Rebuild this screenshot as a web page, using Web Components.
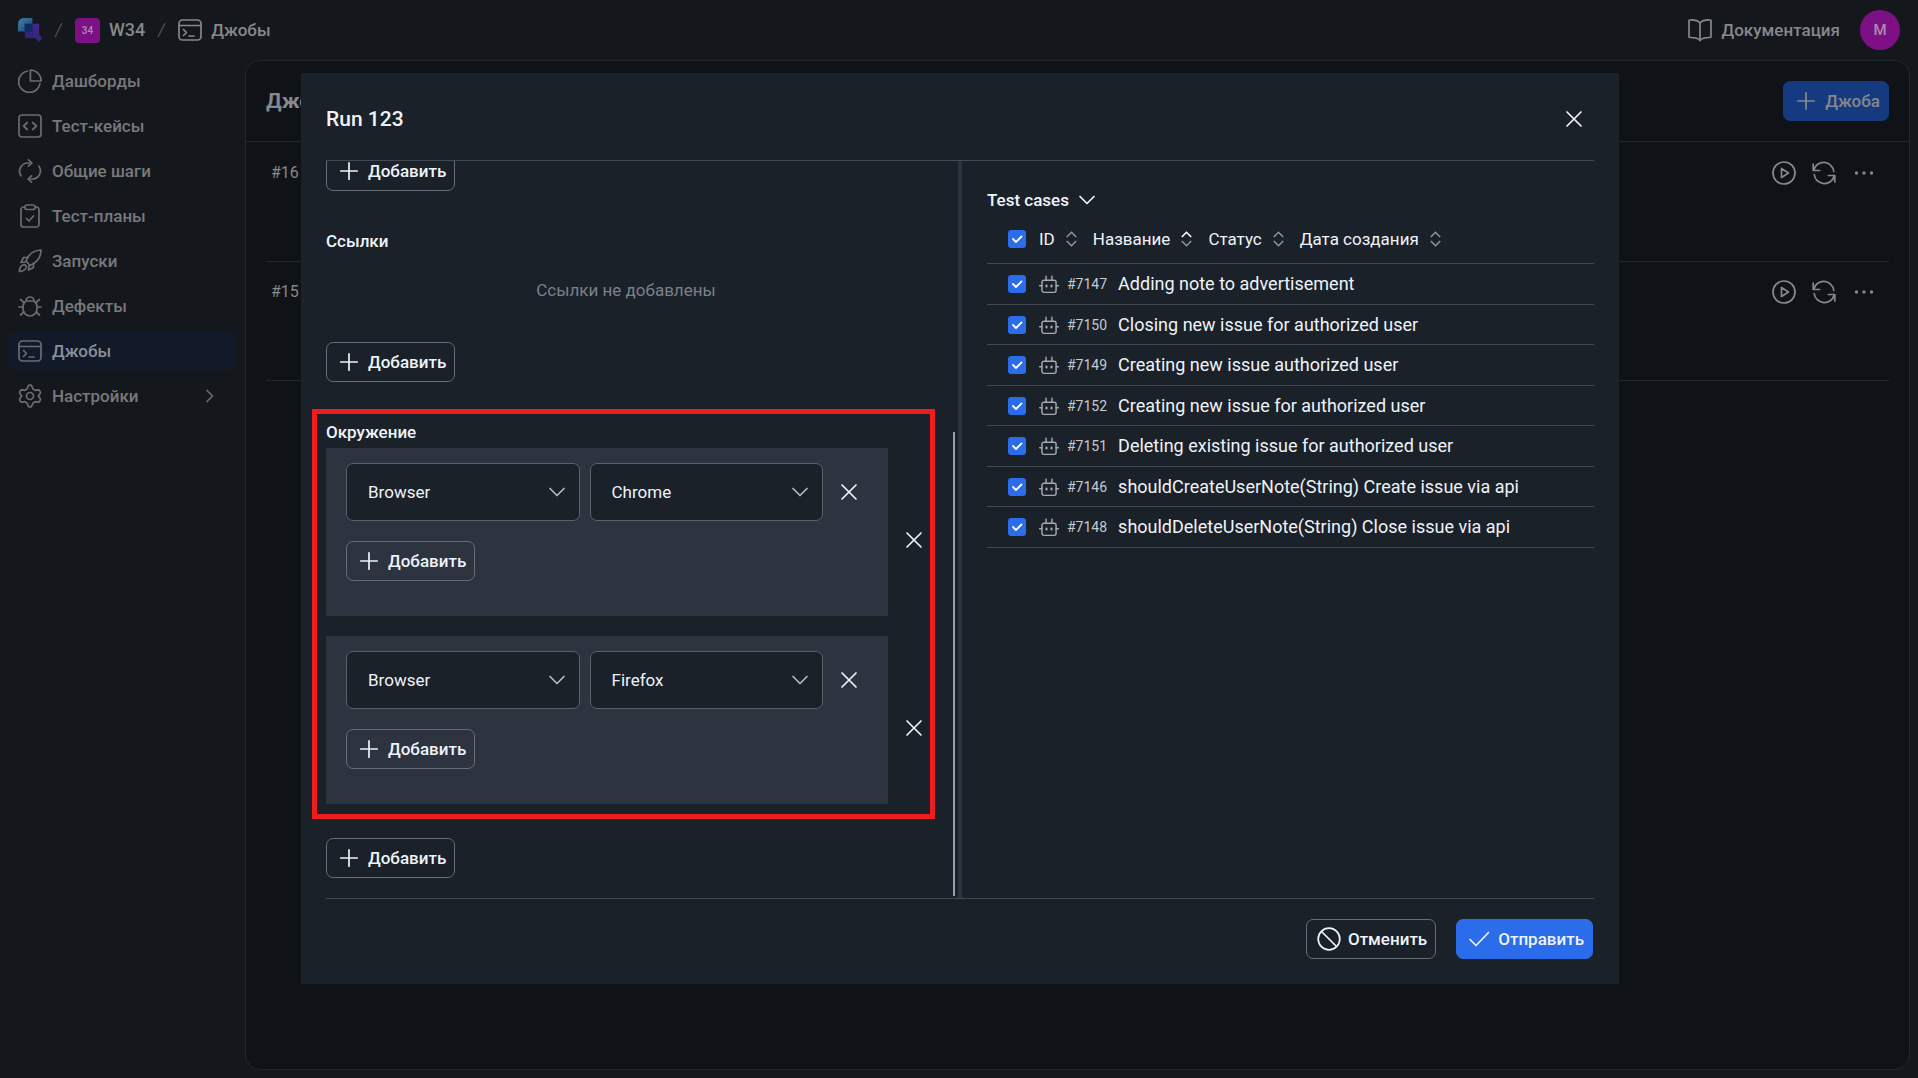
<!DOCTYPE html>
<html lang="ru">
<head>
<meta charset="utf-8">
<title>Run 123</title>
<style>
  html, body {
    margin: 0;
    height: 100%;
    overflow: hidden;
  }
  body {
    background-color: #14171b;
    font-family: Roboto, 'Noto Sans', sans-serif;
    font-size: 17px;
    line-height: 24px;
    color: #eef3fa;
  }
</style>
</head>
<body>
<tms-app></tms-app>

<script>
const ICONS = {
  logo: `<defs>
      <linearGradient id="a" x1="0" y1="0" x2="1" y2="1"><stop offset="0" stop-color="#3f86a3"/><stop offset="1" stop-color="#1b3f7c"/></linearGradient>
      <linearGradient id="b" x1="0" y1="1" x2="1" y2="0"><stop offset="0" stop-color="#2c2468"/><stop offset="1" stop-color="#432a8c"/></linearGradient>
    </defs>
    <path d="M6 0h9v14H0V6a6 6 0 0 1 6-6z" fill="url(#a)" stroke="none"/>
    <path d="M7 6h15v11l3 4-3 4-4-4H9a2 2 0 0 1-2-2z" fill="url(#b)" stroke="none"/>
    <path d="M7 6h8v8H7z" fill="#102a63" stroke="none"/>`,
  dashboard: '<path d="M9.5 2A10.8 10.8 0 1 0 22 14.7"/><path d="M12.4 1v11h10.8A10.9 10.9 0 0 0 12.4 1z"/>',
  code: '<rect x="1" y="1" width="22" height="22" rx="3"/><path d="M9.3 8.5 5.5 12l3.8 3.5M14.7 8.5l3.8 3.5-3.8 3.5"/>',
  sync: '<path d="M13.5 4H10a8.2 8.2 0 0 0-7 12.8M10.5 20H14a8.2 8.2 0 0 0 7-12.8"/><path d="M10.5.8 13.9 4l-3.4 3.2M13.5 16.8 10.1 20l3.4 3.2"/>',
  plan: '<path d="M7 3H5.5A2.5 2.5 0 0 0 3 5.5v15A2.500 2.500 0 0 0 5.5 23h13a2.500 2.500 0 0 0 2.500-2.500v-15A2.500 2.500 0 0 0 18.500 3H17"/><path d="M9 1h6a2 2 0 0 1 0 4.500H9A2 2 0 0 1 9 1zM8.500 14.500l2.500 2.500 4.500-5"/>',
  rocket: '<path d="M8 12c2-6 7-10.500 15-11 0 8-5 13-11 15.500z"/><path d="M10 8.500H5.500L3 13.500l4-.5M15.500 14v4.500l-5 2.500.5-4.500"/><path d="M5 16c-2.500 1-3.500 3.500-3.700 6.500 3-.2 5.700-1 6.700-3.500a2.200 2.200 0 0 0-3-3z"/>',
  bug: '<path d="M5 12a7 7 0 0 1 3-5h8a7 7 0 0 1 3 5v3a7 7 0 0 1-14 0zM8 7a4 4 0 0 1 8 0"/><path d="M5 13H1M19 13h4M6 8.500 2.500 5.500M18 8.500l3.500-3M6 18l-3.500 3M18 18l3.500 3"/>',
  terminal: '<rect x="1" y="2" width="22" height="20" rx="3.500"/><path d="M1 7.500h22M5.500 11.500 8.500 14.500 5.500 17.500M11 18h5"/>',
  gear: '<path d="M10 2.500 10.800 1.200h2.400l.8 1.300 1 2.500 2.300 1.300 2.700-.4 1.300.3 1.200 2.100-.5 1.400-1.700 2.300 1.700 2.300.5 1.400-1.200 2.100-1.300.3-2.700-.4-2.300 1.300-1 2.500-.8 1.300h-2.400l-.8-1.300-1-2.500-2.300-1.300-2.700.4-1.300-.3-1.200-2.100.5-1.400L3.700 12 2 9.700l-.5-1.400 1.200-2.100 1.300-.3 2.700.4L9 5z"/><circle cx="12" cy="12" r="3.500"/>',
  next: '<path d="m10 6.500 5.500 5.500-5.500 5.500"/>',
  down: '<path d="m5 8.500 7 7 7-7"/>',
  book: '<path d="M12 5C10 2.500 6 1.800 1.800 2A.9.900 0 0 0 1 3v15.500a1 1 0 0 0 1 1c4-.1 8 .3 10 3 2-2.700 6-3.100 10-3a1 1 0 0 0 1-1V3a.9.900 0 0 0-.8-1C18 1.800 14 2.500 12 5zm0 0v17.500"/>',
  plus: '<path d="M12 3.800v16.400M3.800 12h16.400"/>',
  close: '<path d="m5 5 14 14M19 5 5 19"/>',
  play: '<circle cx="12" cy="12" r="11"/><path d="M9.500 7.500v9l7-4.500z"/>',
  refresh: '<path d="M1.200 3v6.500h6.500M22.800 21v-6.500h-6.500"/><path d="M1.800 9A10.200 10.200 0 0 1 21.800 10.500M22.200 15A10.200 10.200 0 0 1 2.200 13.500"/>',
  more: '<g fill="currentColor" stroke="none"><circle cx="4.500" cy="12" r="1.700"/><circle cx="12" cy="12" r="1.700"/><circle cx="19.500" cy="12" r="1.700"/></g>',
  ban: '<circle cx="12" cy="12" r="10.800"/><path d="m4.500 4.500 15 15"/>',
  check: '<path d="m3 12.500 6 6L21.500 5.500"/>',
  robot: '<rect x="3.500" y="7.500" width="17" height="14.500" rx="2.500"/><path d="M8.500 7.500V2.500M15.500 7.500V2.500M3.500 14H.8M20.500 14h2.700"/><path d="M9 14v1M15 14v1" stroke-width="2.600"/>'
};

class TmsIcon extends HTMLElement {
  constructor() {
    super();
    this.attachShadow({mode: 'open'});
  }
  connectedCallback() {
    this.shadowRoot.innerHTML = `
      <style>
        :host {
          display: block;
          flex: none;
          width: 24px;
          height: 24px;
        }
        svg {
          display: block;
          width: 100%;
          height: 100%;
        }
      </style>
      <svg viewBox="${this.getAttribute('box') || '0 0 24 24'}" fill="none" stroke="currentColor" stroke-width="1.7" stroke-linecap="round" stroke-linejoin="round" aria-hidden="true">${ICONS[this.getAttribute('name')]}</svg>
    `;
  }
}
customElements.define('tms-icon', TmsIcon);

class TmsButton extends HTMLElement {
  constructor() {
    super();
    this.attachShadow({mode: 'open'});
  }
  connectedCallback() {
    this.shadowRoot.innerHTML = `
      <style>
        :host {
          display: inline-block;
          vertical-align: top;
        }
        button {
          display: flex;
          align-items: center;
          gap: 7px;
          box-sizing: border-box;
          height: 40px;
          padding: 0 8px 0 10px;
          border: 1px solid #666d78;
          border-radius: 7px;
          background: none;
          color: inherit;
          font: inherit;
          font-weight: 500;
          cursor: pointer;
        }
        :host([kind=primary]) button {
          border-color: var(--primary, #2a6ce9);
          background-color: var(--primary, #2a6ce9);
        }
      </style>
      <button type="button"><tms-icon name="${this.getAttribute('icon')}"></tms-icon><slot></slot></button>
    `;
  }
}
customElements.define('tms-button', TmsButton);

class TmsIconButton extends HTMLElement {
  constructor() {
    super();
    this.attachShadow({mode: 'open'});
  }
  connectedCallback() {
    this.shadowRoot.innerHTML = `
      <style>
        :host {
          display: block;
          flex: none;
        }
        button {
          display: block;
          padding: 0;
          border: 0;
          background: none;
          color: inherit;
          cursor: pointer;
        }
      </style>
      <button type="button" aria-label="${this.getAttribute('label')}"><tms-icon name="${this.getAttribute('icon')}"></tms-icon></button>
    `;
  }
}
customElements.define('tms-icon-button', TmsIconButton);

class TmsHeader extends HTMLElement {
  constructor() {
    super();
    this.attachShadow({mode: 'open'});
    this.shadowRoot.innerHTML = `
      <style>
        :host {
          display: flex;
          justify-content: space-between;
          align-items: center;
          height: 60px;
          padding: 0 18px;
          color: #85888c;
          font-weight: 500;
        }
        nav, div {
          display: flex;
          align-items: center;
        }
        nav { gap: 12px; }
        div { gap: 20px; }
        a {
          display: flex;
          align-items: center;
          gap: 9px;
          color: inherit;
          text-decoration: none;
        }
        nav a { font-size: 18px; }
        nav a:last-child { font-size: 17px; }
        .slash {
          width: 9px;
          height: 14px;
          color: #484b50;
        }
        .badge {
          width: 25px;
          height: 25px;
          border-radius: 4px;
          background-color: #7d1085;
          color: #a98cac;
          font-size: 10px;
          line-height: 25px;
          text-align: center;
        }
        .avatar {
          width: 40px;
          height: 40px;
          border: 0;
          padding: 0;
          border-radius: 50%;
          background-color: #7d1085;
          color: #a98cac;
          font: inherit;
          font-size: 15px;
        }
      </style>
      <nav aria-label="Навигация">
        <a href="#" aria-label="Главная"><tms-icon name="logo" box="0 0 25 25"></tms-icon></a>
        <svg class="slash" viewBox="0 0 9 14" stroke="currentColor" stroke-width="1.500"><path d="M8 0 1 14"/></svg>
        <a href="#"><span class="badge">34</span>W34</a>
        <svg class="slash" viewBox="0 0 9 14" stroke="currentColor" stroke-width="1.500"><path d="M8 0 1 14"/></svg>
        <a href="#"><tms-icon name="terminal"></tms-icon>Джобы</a>
      </nav>
      <div>
        <a href="#"><tms-icon name="book"></tms-icon>Документация</a>
        <button class="avatar" type="button">M</button>
      </div>
    `;
  }
}
customElements.define('tms-header', TmsHeader);

class TmsSidebar extends HTMLElement {
  constructor() {
    super();
    this.attachShadow({mode: 'open'});
    const items = [
      ['dashboard', 'Дашборды'],
      ['code', 'Тест-кейсы'],
      ['sync', 'Общие шаги'],
      ['plan', 'Тест-планы'],
      ['rocket', 'Запуски'],
      ['bug', 'Дефекты'],
      ['terminal', 'Джобы'],
      ['gear', 'Настройки']
    ];
    this.shadowRoot.innerHTML = `
      <style>
        :host {
          display: block;
          box-sizing: border-box;
          padding: 2px 10px 0 9px;
        }
        nav {
          display: flex;
          flex-direction: column;
          gap: 7px;
        }
        a {
          display: flex;
          align-items: center;
          gap: 10px;
          height: 38px;
          padding: 0 14px 0 9px;
          border-radius: 5px;
          color: #76797e;
          font-weight: 500;
          text-decoration: none;
        }
        a.active {
          background-color: #121a29;
          color: #8b8f96;
        }
        tms-icon { color: #696c71; }
        .next { margin-left: auto; }
      </style>
      <nav>
        ${items.map(([icon, text]) => `<a href="#"${text === 'Джобы' ? ' class="active" aria-current="page"' : ''}><tms-icon name="${icon}"></tms-icon>${text}${icon === 'gear' ? '<tms-icon class="next" name="next"></tms-icon>' : ''}</a>`).join('')}
      </nav>
    `;
  }
}
customElements.define('tms-sidebar', TmsSidebar);

class TmsJobs extends HTMLElement {
  constructor() {
    super();
    this.attachShadow({mode: 'open'});
    this.shadowRoot.innerHTML = `
      <style>
        :host {
          display: block;
          border: 1px solid #24272b;
          border-radius: 15px;
          background-color: #0f1216;
          color: #85888c;
        }
        header {
          display: flex;
          justify-content: space-between;
          align-items: center;
          height: 80px;
          padding: 0 20px;
          border-bottom: 1px solid #24272b;
          --primary: #153a80;
        }
        h1 {
          margin: 0;
          font-size: 21px;
          font-weight: 700;
        }
        ul {
          margin: 0 20px;
          padding: 1px 0 0;
          list-style: none;
        }
        li {
          display: flex;
          align-items: flex-start;
          gap: 16px;
          box-sizing: border-box;
          height: 119px;
          padding: 18px 13px 0 5px;
          border-bottom: 1px solid #24272b;
        }
        span {
          flex: 1;
          font-size: 16px;
        }
      </style>
      <header>
        <h1>Джобы</h1>
        <tms-button kind="primary" icon="plus">Джоба</tms-button>
      </header>
      <ul>
        ${['#16', '#15'].map(id => `
          <li>
            <span>${id}</span>
            <tms-icon-button icon="play" label="Запустить"></tms-icon-button>
            <tms-icon-button icon="refresh" label="Обновить"></tms-icon-button>
            <tms-icon-button icon="more" label="Ещё"></tms-icon-button>
          </li>`).join('')}
      </ul>
    `;
  }
}
customElements.define('tms-jobs', TmsJobs);

class TmsSelect extends HTMLElement {
  constructor() {
    super();
    this.attachShadow({mode: 'open'});
  }
  connectedCallback() {
    this.shadowRoot.innerHTML = `
      <style>
        :host {
          display: grid;
          flex: 1;
          align-items: center;
        }
        select, tms-icon {
          grid-area: 1 / 1;
        }
        select {
          appearance: none;
          width: 100%;
          height: 58px;
          padding: 0 40px 0 21px;
          border: 1px solid #59616c;
          border-radius: 7px;
          background-color: #1b2129;
          color: inherit;
          font: inherit;
        }
        tms-icon {
          justify-self: end;
          margin-right: 11px;
          color: #b4b9c2;
          pointer-events: none;
        }
      </style>
      <select aria-label="${this.getAttribute('label')}"><option>${this.getAttribute('value')}</option></select>
      <tms-icon name="down"></tms-icon>
    `;
  }
}
customElements.define('tms-select', TmsSelect);

class TmsEnvironment extends HTMLElement {
  constructor() {
    super();
    this.attachShadow({mode: 'open'});
  }
  connectedCallback() {
    this.shadowRoot.innerHTML = `
      <style>
        :host {
          display: flex;
          align-items: center;
          gap: 14px;
        }
        :host > tms-icon-button { padding-top: 15px; }
        .card {
          flex: 1;
          box-sizing: border-box;
          height: 168px;
          padding: 15px 27px 0 20px;
          background-color: #2d333f;
        }
        .row {
          display: flex;
          align-items: center;
          gap: 10px;
          margin-bottom: 20px;
        }
        .row tms-icon-button { margin-left: 4px; }
      </style>
      <div class="card">
        <div class="row">
          <tms-select label="Переменная" value="Browser"></tms-select>
          <tms-select label="Значение" value="${this.getAttribute('value')}"></tms-select>
          <tms-icon-button icon="close" label="Удалить переменную"></tms-icon-button>
        </div>
        <tms-button icon="plus">Добавить</tms-button>
      </div>
      <tms-icon-button class="remove" icon="close" label="Удалить окружение"></tms-icon-button>
    `;
  }
}
customElements.define('tms-environment', TmsEnvironment);

class TmsRunForm extends HTMLElement {
  constructor() {
    super();
    this.attachShadow({mode: 'open'});
    this.shadowRoot.innerHTML = `
      <style>
        :host {
          display: flex;
          flex-direction: column;
          justify-content: flex-end;
          position: relative;
          box-sizing: border-box;
          min-height: 0;
          overflow: hidden;
          padding: 0 32px 20px 25px;
          border-right: 4px solid #2d333f;
        }
        section {
          flex: none;
          margin-bottom: 34px;
        }
        section:last-of-type { margin-bottom: 0; }
        h3 {
          margin: 0;
          font-size: 17px;
          font-weight: 500;
          line-height: 32px;
        }
        p {
          margin: 0;
          padding: 21px 0 40px;
          text-align: center;
          color: #7a808a;
        }
        .marked {
          position: relative;
        }
        .marked::after {
          content: '';
          position: absolute;
          inset: -7px -9px -15px -14px;
          border: 5px solid #ee1c1f;
          pointer-events: none;
        }
        tms-environment + tms-environment { margin-top: 20px; }
        .marked + tms-button { margin-top: 34px; }
        .thumb {
          position: absolute;
          right: 3px;
          bottom: 2px;
          width: 2px;
          height: 63%;
          background-color: #9a9fa7;
        }
      </style>
      <section>
        <tms-button icon="plus">Добавить</tms-button>
      </section>
      <section>
        <h3>Ссылки</h3>
        <p>Ссылки не добавлены</p>
        <tms-button icon="plus">Добавить</tms-button>
      </section>
      <section>
        <div class="marked">
          <h3>Окружение</h3>
          <tms-environment value="Chrome"></tms-environment>
          <tms-environment value="Firefox"></tms-environment>
        </div>
        <tms-button icon="plus">Добавить</tms-button>
      </section>
      <div class="thumb"></div>
    `;
  }
}
customElements.define('tms-run-form', TmsRunForm);

class TmsCheckbox extends HTMLElement {
  constructor() {
    super();
    this.attachShadow({mode: 'open'});
  }
  connectedCallback() {
    this.shadowRoot.innerHTML = `
      <style>
        :host {
          display: block;
          flex: 1;
        }
        label {
          display: flex;
          align-items: center;
        }
        .box {
          display: grid;
          flex: none;
          margin-right: 13px;
        }
        input, svg {
          grid-area: 1 / 1;
          width: 18px;
          height: 18px;
          margin: 0;
        }
        input {
          appearance: none;
          border-radius: 3px;
          background-color: #2a6ce9;
        }
        svg { pointer-events: none; }
      </style>
      <label>
        <span class="box">
          <input type="checkbox" checked${this.hasAttribute('label') ? ` aria-label="${this.getAttribute('label')}"` : ''}>
          <svg viewBox="0 0 18 18" fill="none" stroke="#fff" stroke-width="1.800" stroke-linecap="round" stroke-linejoin="round"><path d="m5 9 3 3 5.500-5.500"/></svg>
        </span>
        <slot></slot>
      </label>
    `;
  }
}
customElements.define('tms-checkbox', TmsCheckbox);

class TmsTestCases extends HTMLElement {
  constructor() {
    super();
    this.attachShadow({mode: 'open'});
    const columns = ['ID', 'Название', 'Статус', 'Дата создания'];
    const cases = [
      ['#7147', 'Adding note to advertisement'],
      ['#7150', 'Closing new issue for authorized user'],
      ['#7149', 'Creating new issue authorized user'],
      ['#7152', 'Creating new issue for authorized user'],
      ['#7151', 'Deleting existing issue for authorized user'],
      ['#7146', 'shouldCreateUserNote(String) Create issue via api'],
      ['#7148', 'shouldDeleteUserNote(String) Close issue via api']
    ];
    this.shadowRoot.innerHTML = `
      <style>
        :host {
          display: block;
          padding: 24px 25px 0 25px;
        }
        button {
          display: flex;
          align-items: center;
          padding: 0;
          border: 0;
          background: none;
          color: inherit;
          font: inherit;
        }
        .toggle {
          gap: 6px;
          height: 30px;
          font-weight: 500;
        }
        .columns {
          display: flex;
          align-items: center;
          gap: 16px;
          height: 48px;
          padding-left: 21px;
          border-bottom: 1px solid #444a54;
        }
        .columns tms-checkbox {
          flex: none;
          margin-right: -16px;
        }
        .columns button { gap: 11px; }
        .sort {
          width: 11px;
          height: 16px;
          color: #8e939c;
        }
        .sort .on { stroke: #fff; }
        ul {
          margin: 0;
          padding: 0;
          list-style: none;
        }
        li {
          display: flex;
          align-items: center;
          box-sizing: border-box;
          height: 41px;
          padding-left: 21px;
          border-bottom: 1px solid #444a54;
          font-size: 18px;
        }
        li:nth-child(even) { height: 40px; }
        li tms-icon {
          width: 20px;
          height: 20px;
          color: #a5aab3;
        }
        .id {
          margin: 0 11px 0 8px;
          font-size: 14px;
          color: #c5cad2;
        }
      </style>
      <button class="toggle" type="button" aria-expanded="true">Test cases <tms-icon name="down"></tms-icon></button>
      <div class="columns">
        <tms-checkbox label="Выбрать все"></tms-checkbox>
        ${columns.map(name => `<button type="button">${name}<svg class="sort" viewBox="0 0 11 16" fill="none" stroke="currentColor" stroke-width="1.600"><path${name === 'Название' ? ' class="on"' : ''} d="M.8 6 5.500 1.300 10.200 6"/><path d="M.8 10l4.700 4.700L10.200 10"/></svg></button>`).join('')}
      </div>
      <ul>
        ${cases.map(([id, name]) => `<li><tms-checkbox><tms-icon name="robot"></tms-icon><span class="id">${id}</span><span>${name}</span></tms-checkbox></li>`).join('')}
      </ul>
    `;
  }
}
customElements.define('tms-test-cases', TmsTestCases);

class TmsModal extends HTMLElement {
  constructor() {
    super();
    this.attachShadow({mode: 'open'});
    this.shadowRoot.innerHTML = `
      <style>
        :host {
          display: flex;
          flex-direction: column;
          background-color: #1b2129;
        }
        header, footer {
          display: flex;
          flex: none;
          align-items: center;
          box-sizing: border-box;
          margin: 0 25px;
        }
        header {
          justify-content: space-between;
          height: 88px;
          padding: 5px 8px 0 0;
          border-bottom: 1px solid #444a54;
        }
        footer {
          justify-content: flex-end;
          align-items: flex-start;
          gap: 20px;
          height: 86px;
          padding: 20px 1px 0 0;
          border-top: 1px solid #444a54;
        }
        .body {
          display: grid;
          grid-template-columns: calc(50% + 2px) minmax(0, 1fr);
          grid-template-rows: minmax(0, 1fr);
          flex: 1;
          min-height: 0;
        }
      </style>
      <header>
        <slot name="title"></slot>
        <tms-icon-button icon="close" label="Закрыть"></tms-icon-button>
      </header>
      <div class="body"><slot></slot></div>
      <footer><slot name="actions"></slot></footer>
    `;
  }
}
customElements.define('tms-modal', TmsModal);

class TmsApp extends HTMLElement {
  constructor() {
    super();
    this.attachShadow({mode: 'open'});
    this.shadowRoot.innerHTML = `
      <style>
        :host {
          display: grid;
          grid-template: 60px minmax(0, 1fr) / 245px minmax(0, 1fr);
          box-sizing: border-box;
          height: 100vh;
          padding-bottom: 8px;
        }
        tms-header { grid-column: 1 / 3; }
        tms-jobs { margin-right: 8px; }
        .overlay {
          position: fixed;
          inset: 0;
          display: flex;
          padding: 73px 299px 94px 301px;
        }
        tms-modal { flex: 1; }
        h2 {
          margin: 0;
          font-size: 21px;
          font-weight: 500;
        }
      </style>
      <tms-header></tms-header>
      <tms-sidebar></tms-sidebar>
      <tms-jobs></tms-jobs>
      <div class="overlay">
        <tms-modal role="dialog" aria-modal="true" aria-label="Run 123">
          <h2 slot="title">Run 123</h2>
          <tms-run-form></tms-run-form>
          <tms-test-cases></tms-test-cases>
          <tms-button slot="actions" icon="ban">Отменить</tms-button>
          <tms-button slot="actions" kind="primary" icon="check">Отправить</tms-button>
        </tms-modal>
      </div>
    `;
  }
}
customElements.define('tms-app', TmsApp);
</script>
</body>
</html>
